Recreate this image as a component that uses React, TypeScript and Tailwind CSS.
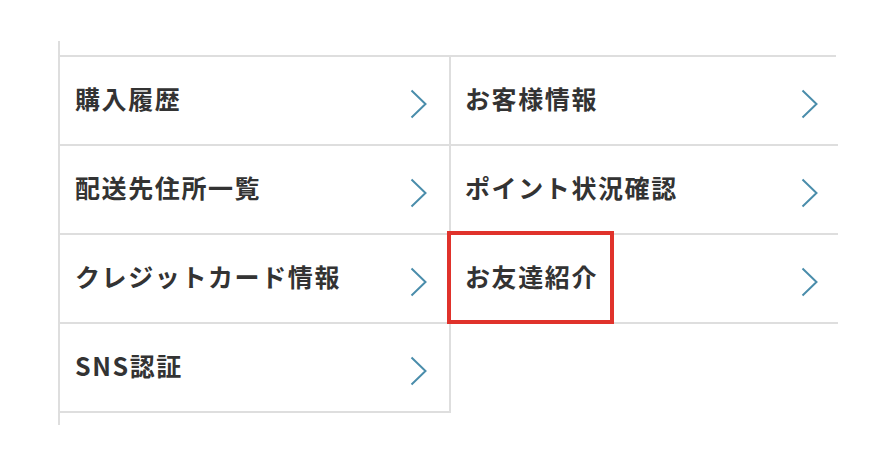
import React from 'react';

/**
 * MyPage menu grid
 * Two columns of links, each row with a chevron on the right.
 */
type MenuItem = { label: string; highlight?: boolean };

const left: MenuItem[] = [
  { label: '購入履歴' },
  { label: '配送先住所一覧' },
  { label: 'クレジットカード情報' },
  { label: 'SNS認証' },
];

const right: MenuItem[] = [
  { label: 'お客様情報' },
  { label: 'ポイント状況確認' },
  { label: 'お友達紹介', highlight: true },
];

const Chevron = () => (
  <svg width="17" height="30" viewBox="0 0 17 30" className="shrink-0 mt-[6px]">
    <polyline points="1.5,1.5 15.5,15 1.5,28.5" fill="none" stroke="#4a8dab" strokeWidth="2" />
  </svg>
);

const Cell: React.FC<{ item: MenuItem; side: 'l' | 'r' }> = ({ item, side }) => (
  <a
    href="#"
    className={
      side === 'l'
        ? 'relative flex items-center justify-between h-[89px] border-b-2 border-r-2 border-[#dedede] pl-[15px] pr-[22px]'
        : 'relative flex items-center justify-between h-[89px] border-b-2 border-[#dedede] pl-[14px] pr-[20px]'
    }
  >
    <span className="mb-[4px] text-[25px] font-bold text-[#333] tracking-[1.6px] leading-none">{item.label}</span>
    <Chevron />
    {item.highlight && (
      <span className="absolute left-[-4px] top-[-4px] w-[167px] h-[93px] border-[4px] border-[#e0322b]" />
    )}
  </a>
);

export default function App() {
  return (
    <div
      className="w-[895px] h-[466px] bg-white pl-[58px] pt-[41px]"
      style={{ fontFamily: '"Noto Sans CJK JP", "Noto Sans", sans-serif' }}
    >
      <div className="w-[778px] border-l-2 border-[#dedede] pt-[14px] pb-[12px]">
        <div className="grid grid-cols-[391px_387px] border-t-2 border-[#dedede]">
          <div className="flex flex-col">
            {left.map((it, i) => (
              <Cell key={i} item={it} side="l" />
            ))}
          </div>
          <div className="flex flex-col">
            {right.map((it, i) => (
              <Cell key={i} item={it} side="r" />
            ))}
          </div>
        </div>
      </div>
    </div>
  );
}
